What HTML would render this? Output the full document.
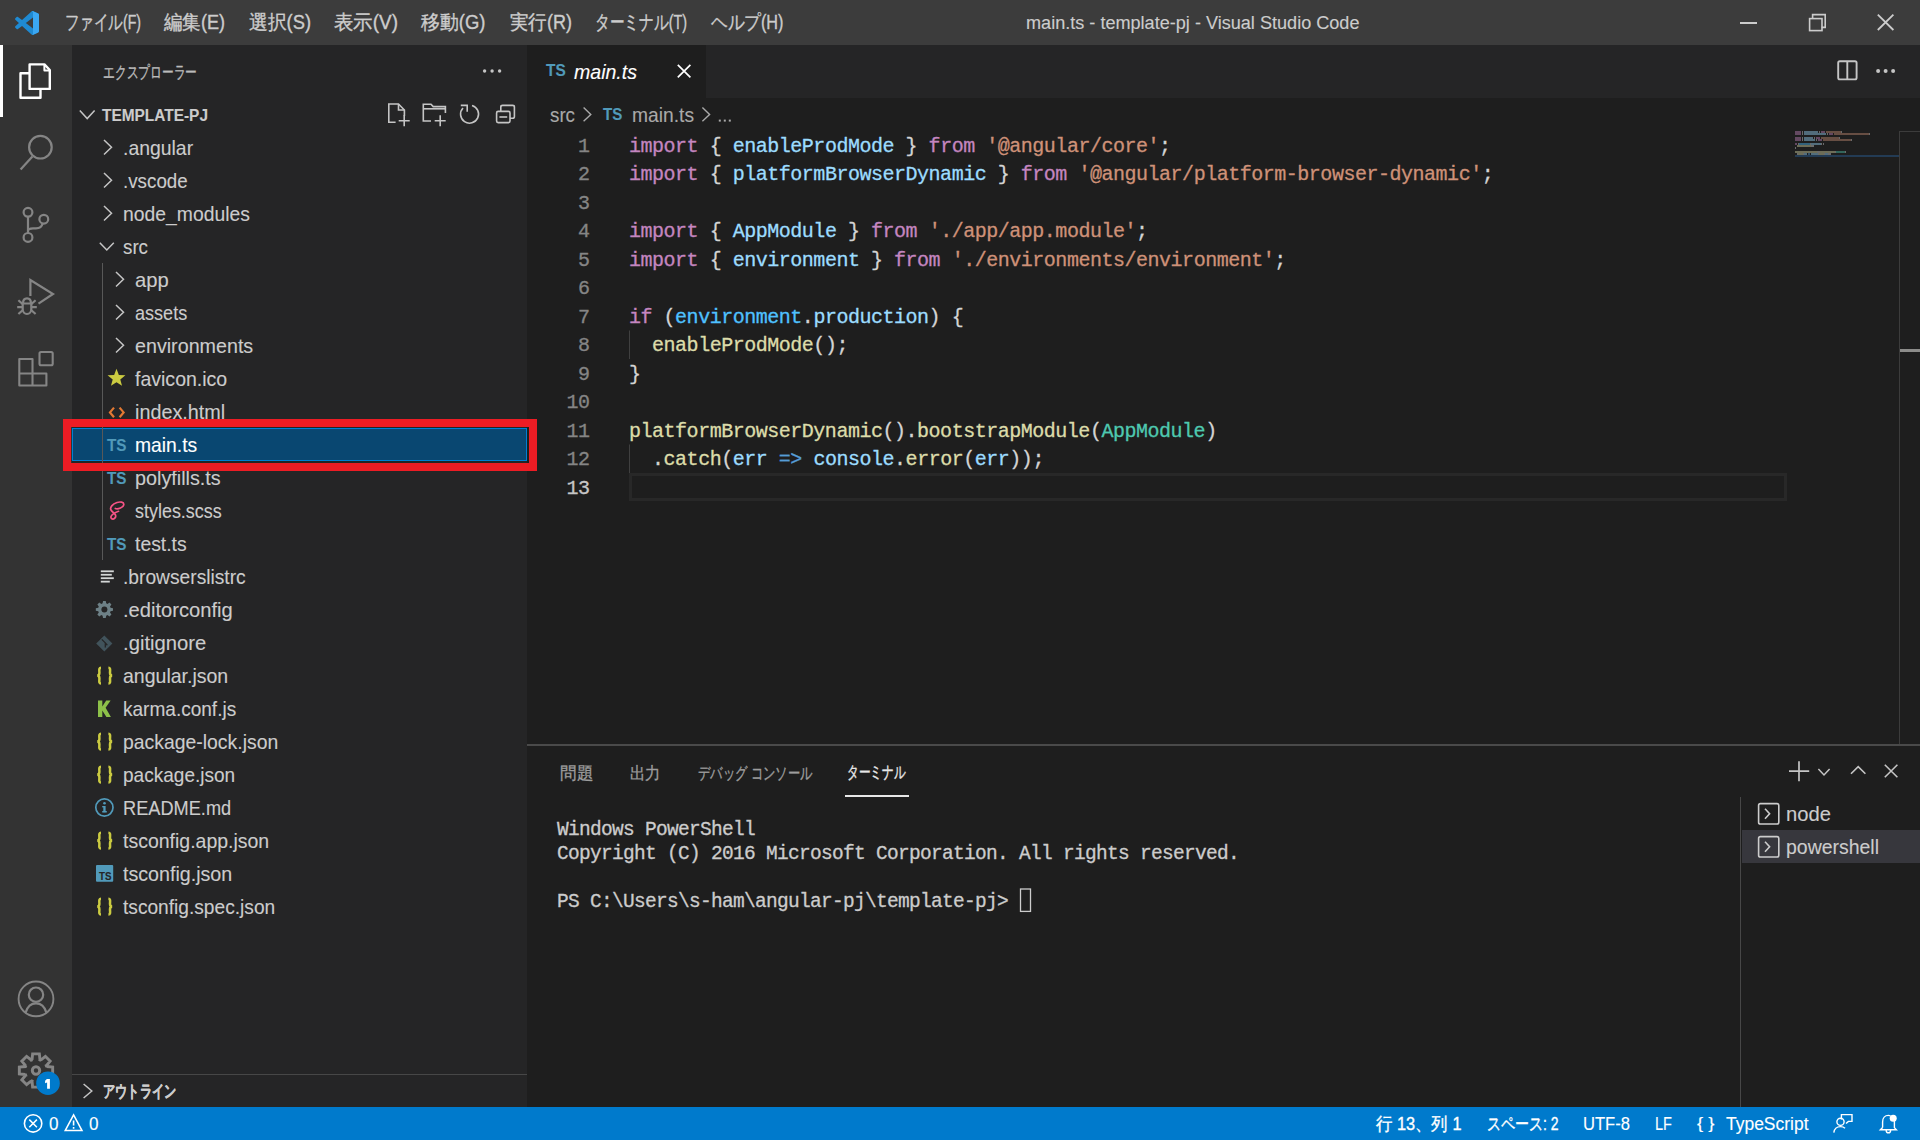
<!DOCTYPE html>
<html><head><meta charset="utf-8">
<style>
*{box-sizing:border-box;margin:0;padding:0}
html,body{width:1920px;height:1140px;overflow:hidden;background:#1e1e1e;font-family:"Liberation Sans",sans-serif;color:#cccccc}
.a{position:absolute}
.t{position:absolute;white-space:pre;line-height:1;transform-origin:0 0}
svg{position:absolute;overflow:visible}
.mono{font-family:"Liberation Mono",monospace}
.k{color:#c586c0}.v{color:#9cdcfe}.s{color:#ce9178}.f{color:#dcdcaa}.c{color:#4ec9b0}.p{color:#d4d4d4}.b{color:#569cd6}
</style></head><body>
<div class="a" style="left:0px;top:0px;width:1920px;height:45px;background:#3c3c3c;"></div>
<svg style="left:15px;top:11px" width="24" height="24" viewBox="0 0 100 100">
<path d="M96.5 10.8 L75.9 0.9 C73.5 -0.3 70.7 0.2 68.8 2.1 L29.4 38 L12.2 25 C10.6 23.8 8.4 23.9 6.9 25.2 L1.4 30.2 C-0.4 31.9 -0.4 34.7 1.4 36.4 L16.3 50 L1.4 63.6 C-0.4 65.3 -0.4 68.1 1.4 69.8 L6.9 74.8 C8.4 76.1 10.6 76.2 12.2 75 L29.4 62 L68.8 97.9 C70.7 99.8 73.5 100.3 75.9 99.1 L96.5 89.2 C98.6 88.2 100 86 100 83.6 V16.4 C100 14 98.6 11.8 96.5 10.8 Z M75 72.7 L45.1 50 L75 27.3 Z" fill="#1f8ad2"></path>
<path d="M96.5 10.8 L75.9 0.9 C73.5 -0.3 70.7 0.2 68.8 2.1 C71 0 75 1.5 75 4.5 V95.5 C75 98.5 71 100 68.8 97.9 C70.7 99.8 73.5 100.3 75.9 99.1 L96.5 89.2 C98.6 88.2 100 86 100 83.6 V16.4 C100 14 98.6 11.8 96.5 10.8 Z" fill="#3ba7f2"></path>
</svg>
<div class="t" style="left: 64.5px; top: 13.49px; font-size: 19.5px; color: rgb(204, 204, 204); -webkit-text-stroke: 0.35px currentcolor; transform: scaleX(0.7245);">ファイル(F)</div>
<div class="t" style="left: 163.5px; top: 13.49px; font-size: 19.5px; color: rgb(204, 204, 204); -webkit-text-stroke: 0.35px currentcolor; transform: scaleX(0.9242);">編集(E)</div>
<div class="t" style="left: 248.5px; top: 13.49px; font-size: 19.5px; color: rgb(204, 204, 204); -webkit-text-stroke: 0.35px currentcolor; transform: scaleX(0.9394);">選択(S)</div>
<div class="t" style="left: 333.5px; top: 13.49px; font-size: 19.5px; color: rgb(204, 204, 204); -webkit-text-stroke: 0.35px currentcolor; transform: scaleX(0.9697);">表示(V)</div>
<div class="t" style="left: 420.5px; top: 13.49px; font-size: 19.5px; color: rgb(204, 204, 204); -webkit-text-stroke: 0.35px currentcolor; transform: scaleX(0.9464);">移動(G)</div>
<div class="t" style="left: 509.5px; top: 13.49px; font-size: 19.5px; color: rgb(204, 204, 204); -webkit-text-stroke: 0.35px currentcolor; transform: scaleX(0.9243);">実行(R)</div>
<div class="t" style="left: 594.5px; top: 13.49px; font-size: 19.5px; color: rgb(204, 204, 204); -webkit-text-stroke: 0.35px currentcolor; transform: scaleX(0.7366);">ターミナル(T)</div>
<div class="t" style="left: 710.5px; top: 13.49px; font-size: 19.5px; color: rgb(204, 204, 204); -webkit-text-stroke: 0.35px currentcolor; transform: scaleX(0.8326);">ヘルプ(H)</div>
<div class="t" style="left: 1026px; top: 13.76px; font-size: 18px; color: rgb(204, 204, 204); -webkit-text-stroke: 0.12px currentcolor; transform: scaleX(1.005);">main.ts - template-pj - Visual Studio Code</div>
<div class="a" style="left:1740px;top:22px;width:17px;height:2px;background:#cccccc;"></div>
<svg style="left:0;top:0" width="1920" height="45">
<rect x="1809.6" y="18.6" width="12.4" height="12" fill="none" stroke="#cccccc" stroke-width="1.6"></rect>
<path d="M1812.6 18.6 V14.6 H1825.2 V27.4 H1821.6" fill="none" stroke="#cccccc" stroke-width="1.6"></path>
<path d="M1877.8 14.6 L1893.4 30 M1893.4 14.6 L1877.8 30" stroke="#cccccc" stroke-width="1.8"></path>
</svg>
<div class="a" style="left:0px;top:45px;width:72px;height:1062px;background:#333333;"></div>
<div class="a" style="left:0px;top:45px;width:3px;height:72px;background:#ffffff;"></div>
<svg style="left:0;top:0" width="72" height="1140">
<g fill="none" stroke="#ffffff" stroke-width="2.4" stroke-linejoin="round">
<path d="M29.6 64.4 H44.4 L49.8 70 V88.9 H29.6 Z"></path>
<path d="M44.4 64.4 V70.4 H49.8" stroke-width="2"></path>
<path d="M29.6 73.2 H20.5 V97.7 H40.5 V88.9"></path>
</g>
<g fill="none" stroke="#858585" stroke-width="2.2">
<circle cx="40.4" cy="147.2" r="11.3"></circle>
<path d="M32.4 156.4 L20.6 169.6"></path>
<circle cx="28" cy="212.3" r="4.4"></circle>
<circle cx="28" cy="237.4" r="4.4"></circle>
<circle cx="43.8" cy="219.2" r="4.4"></circle>
<path d="M28 216.7 V233"></path>
<path d="M28 231 C28 228.6 30 228.4 33 228.4 H36 C40 228.4 42 226.5 42.6 223.4"></path>
<path d="M30.4 296 V280 L53 294 L38.5 303.6"></path>
<path d="M22.3 303.5 H31.7 M23 303.5 C23 300 24.8 298.3 27 298.3 C29.2 298.3 31 300 31 303.5 M22.7 303.5 V309 C22.7 312 24.6 314 27 314 C29.4 314 31.3 312 31.3 309 V303.5"></path>
<path d="M18.4 300.2 L22.6 304 M35.6 300.2 L31.4 304 M17.2 307.2 H22.6 M31.4 307.2 H36.8 M18.4 314 L22.6 310.2 M35.6 314 L31.4 310.2"></path>
<path d="M19.3 359 H32.5 V373.5 H46.4 V385.5 H19.3 Z M32.5 373.5 H19.3 M32.5 373.5 V385.5" stroke-width="2.1" stroke-linejoin="round"></path>
<rect x="39.5" y="352" width="13.2" height="13.3" rx="1.5" stroke-width="2.1"></rect>
</g>
<g fill="none" stroke="#858585">
<circle cx="36" cy="998.9" r="17.4" stroke-width="1.9"></circle>
<circle cx="36" cy="994.7" r="7.2" stroke-width="2.2"></circle>
<path d="M25.6 1012.6 C27.5 1006.4 31.2 1003.4 36 1003.4 C40.8 1003.4 44.5 1006.4 46.4 1012.6" stroke-width="2.2"></path>
</g>
<polygon points="32.52,1059.75 32.02,1059.92 32.62,1053.84 39.38,1053.84 39.98,1059.92 41.14,1060.44 40.66,1060.21 45.39,1056.33 50.17,1061.11 46.29,1065.84 46.75,1067.02 46.58,1066.52 52.66,1067.12 52.66,1073.88 46.58,1074.48 46.06,1075.64 46.29,1075.16 50.17,1079.89 45.39,1084.67 40.66,1080.79 39.48,1081.25 39.98,1081.08 39.38,1087.16 32.62,1087.16 32.02,1081.08 30.86,1080.56 31.34,1080.79 26.61,1084.67 21.83,1079.89 25.71,1075.16 25.25,1073.98 25.42,1074.48 19.34,1073.88 19.34,1067.12 25.42,1066.52 25.94,1065.36 25.71,1065.84 21.83,1061.11 26.61,1056.33 31.34,1060.21" fill="none" stroke="#858585" stroke-width="2.9" stroke-linejoin="miter"></polygon>
<circle cx="36" cy="1070.5" r="3.7" fill="none" stroke="#858585" stroke-width="3"></circle>
<circle cx="48" cy="1083.2" r="11.8" fill="#007acc"></circle>
<path d="M46.9 1078.9 H49.9 V1088.8 H47.1 V1082.4 L45.1 1083.3 V1080.7 Z" fill="#ffffff"></path>
</svg>
<div class="a" style="left:72px;top:45px;width:455px;height:1062px;background:#252526;"></div>
<div class="t" style="left: 102.5px; top: 64.23px; font-size: 16.5px; color: rgb(187, 187, 187); -webkit-text-stroke: 0.35px currentcolor; transform: scaleX(0.6912);">エクスプローラー</div>
<div class="a" style="left:72px;top:428px;width:455px;height:33px;background:#094771;box-shadow:inset 0 0 0 1px #007fd4;"></div>
<div class="a" style="left:102px;top:263px;width:1px;height:297px;background:#585858;"></div>
<div class="a" style="left:72px;top:1074px;width:455px;height:1px;background:#474747;"></div>
<svg style="left:0;top:0" width="1920" height="1140">
<circle cx="484.6" cy="71" r="1.7" fill="#c5c5c5"></circle>
<circle cx="492.1" cy="71" r="1.7" fill="#c5c5c5"></circle>
<circle cx="499.6" cy="71" r="1.7" fill="#c5c5c5"></circle>
<path d="M79.8 110.5 L87.19999999999999 118.6 L94.6 110.5" fill="none" stroke="#c5c5c5" stroke-width="1.5"></path>
<g fill="none" stroke="#c5c5c5" stroke-width="1.6">
<path d="M395.6 122.2 H388.8 V104 H398.5 L404.4 110 V116"></path>
<path d="M398.5 104 V110 H404.4"></path>
<path d="M404.2 115.3 V126.3 M398.7 120.8 H409.7"></path>
<path d="M431 121 H423.3 V104.2 H431 L433.2 106.6 H445.4 V113"></path>
<path d="M423.3 108.8 H431.2 L433.2 108.8 H445.4"></path>
<path d="M440.2 115.3 V126.3 M434.7 120.8 H445.7"></path>
</g>
<g fill="none" stroke="#c5c5c5" stroke-width="1.6">
<path d="M463 108 A9 9 0 1 0 472 105.5"></path>
<path d="M460.8 105.4 H467.2 V111.8" stroke-linejoin="miter"></path>
<rect x="496.6" y="111.4" width="13.4" height="11.2" rx="1.5"></rect>
<path d="M500.8 111.4 V107 C500.8 106 501.6 105.4 502.6 105.4 H512.6 C513.6 105.4 514.4 106 514.4 107 V116.4 C514.4 117.4 513.6 118.2 512.6 118.2 H510"></path>
<path d="M499.4 117 H507.2"></path>
</g>
<path d="M104 140 L111.5 147.25 L104 154.5" fill="none" stroke="#c5c5c5" stroke-width="1.5"></path>
<path d="M104 173 L111.5 180.25 L104 187.5" fill="none" stroke="#c5c5c5" stroke-width="1.5"></path>
<path d="M104 206 L111.5 213.25 L104 220.5" fill="none" stroke="#c5c5c5" stroke-width="1.5"></path>
<path d="M99.8 242.8 L106.8 250 L113.8 242.8" fill="none" stroke="#c5c5c5" stroke-width="1.5"></path>
<path d="M116 272 L123.5 279.25 L116 286.5" fill="none" stroke="#c5c5c5" stroke-width="1.5"></path>
<path d="M116 305 L123.5 312.25 L116 319.5" fill="none" stroke="#c5c5c5" stroke-width="1.5"></path>
<path d="M116 338 L123.5 345.25 L116 352.5" fill="none" stroke="#c5c5c5" stroke-width="1.5"></path>
<polygon points="116.50,368.80 118.85,374.96 125.44,375.30 120.30,379.44 122.03,385.80 116.50,382.20 110.97,385.80 112.70,379.44 107.56,375.30 114.15,374.96" fill="#cbcb41"></polygon>
<path d="M114 407.6 L110 412.4 L114 417.2 M119.6 407.6 L123.6 412.4 L119.6 417.2" fill="none" stroke="#e37933" stroke-width="2.2"></path>
<path d="M115.3 508.5 C118 509.5 123.5 507.5 123.8 504.5 C124 502 120 501.5 117 502.5 C112.5 504 109.5 507.5 111 510 C112 512 114.5 513 115.5 515 C116.5 517.5 113.5 520 111.5 518.5 C109.5 517 112.5 513 118.5 511.3" fill="none" stroke="#f55385" stroke-width="1.7" stroke-linecap="round"></path>
<rect x="100.8" y="570.40" width="13" height="1.8" fill="#d4d7d6"></rect>
<rect x="100.8" y="573.85" width="11" height="1.8" fill="#d4d7d6"></rect>
<rect x="100.8" y="577.30" width="13" height="1.8" fill="#d4d7d6"></rect>
<rect x="100.8" y="580.75" width="9" height="1.8" fill="#d4d7d6"></rect>
<polygon points="110.55,607.71 112.99,608.14 112.99,610.86 110.55,611.29 110.01,612.58 111.44,614.61 109.51,616.54 107.48,615.11 106.19,615.65 105.76,618.09 103.04,618.09 102.61,615.65 101.32,615.11 99.29,616.54 97.36,614.61 98.79,612.58 98.25,611.29 95.81,610.86 95.81,608.14 98.25,607.71 98.79,606.42 97.36,604.39 99.29,602.46 101.32,603.89 102.61,603.35 103.04,600.91 105.76,600.91 106.19,603.35 107.48,603.89 109.51,602.46 111.44,604.39 110.01,606.42" fill="#6d8086"></polygon><circle cx="104.4" cy="609.5" r="3" fill="#252526"></circle>
<path d="M104.3 635.4 L112.39999999999999 643.4 L104.3 651.4 L96.2 643.4 Z" fill="#41535b"></path>
<path d="M101.8 639.4 L105.3 642.9 V647.4 M105.3 642.9 L107.3 645.1999999999999" stroke="#252526" stroke-width="1.3" fill="none"></path>
<path d="M101 667.8 C98.6 667.8 99.4 670.5 99.4 672.8 C99.4 674.6 98.6 675.6 97.2 675.6 C98.6 675.6 99.4 676.6 99.4 678.4 C99.4 680.7 98.6 683.4 101 683.4 M108.4 667.8 C110.8 667.8 110 670.5 110 672.8 C110 674.6 110.8 675.6 112.2 675.6 C110.8 675.6 110 676.6 110 678.4 C110 680.7 110.8 683.4 108.4 683.4" fill="none" stroke="#cbcb41" stroke-width="2.5"></path>
<path d="M98 700.5 H102.3 V706.5 L106.2 700.5 H110.6 L105.6 707.8 L110.9 717 H106.4 L102.3 710.5 V717 H98 Z" fill="#8dc149"></path>
<path d="M101 733.8 C98.6 733.8 99.4 736.5 99.4 738.8 C99.4 740.6 98.6 741.6 97.2 741.6 C98.6 741.6 99.4 742.6 99.4 744.4 C99.4 746.7 98.6 749.4 101 749.4 M108.4 733.8 C110.8 733.8 110 736.5 110 738.8 C110 740.6 110.8 741.6 112.2 741.6 C110.8 741.6 110 742.6 110 744.4 C110 746.7 110.8 749.4 108.4 749.4" fill="none" stroke="#cbcb41" stroke-width="2.5"></path>
<path d="M101 766.8 C98.6 766.8 99.4 769.5 99.4 771.8 C99.4 773.6 98.6 774.6 97.2 774.6 C98.6 774.6 99.4 775.6 99.4 777.4 C99.4 779.7 98.6 782.4 101 782.4 M108.4 766.8 C110.8 766.8 110 769.5 110 771.8 C110 773.6 110.8 774.6 112.2 774.6 C110.8 774.6 110 775.6 110 777.4 C110 779.7 110.8 782.4 108.4 782.4" fill="none" stroke="#cbcb41" stroke-width="2.5"></path>
<circle cx="104.4" cy="807.5" r="8.6" fill="none" stroke="#519aba" stroke-width="1.7"></circle>
<rect x="103.3" y="806" width="2.3" height="6.2" fill="#519aba"></rect><rect x="102.2" y="811" width="4.6" height="1.5" fill="#519aba"></rect><rect x="102.2" y="806" width="2.5" height="1.4" fill="#519aba"></rect><circle cx="104.5" cy="803.3" r="1.3" fill="#519aba"></circle>
<path d="M101 832.8 C98.6 832.8 99.4 835.5 99.4 837.8 C99.4 839.6 98.6 840.6 97.2 840.6 C98.6 840.6 99.4 841.6 99.4 843.4 C99.4 845.7 98.6 848.4 101 848.4 M108.4 832.8 C110.8 832.8 110 835.5 110 837.8 C110 839.6 110.8 840.6 112.2 840.6 C110.8 840.6 110 841.6 110 843.4 C110 845.7 110.8 848.4 108.4 848.4" fill="none" stroke="#cbcb41" stroke-width="2.5"></path>
<rect x="96" y="865" width="17.2" height="16.7" rx="1" fill="#519aba"></rect>
<path d="M101 898.8 C98.6 898.8 99.4 901.5 99.4 903.8 C99.4 905.6 98.6 906.6 97.2 906.6 C98.6 906.6 99.4 907.6 99.4 909.4 C99.4 911.7 98.6 914.4 101 914.4 M108.4 898.8 C110.8 898.8 110 901.5 110 903.8 C110 905.6 110.8 906.6 112.2 906.6 C110.8 906.6 110 907.6 110 909.4 C110 911.7 110.8 914.4 108.4 914.4" fill="none" stroke="#cbcb41" stroke-width="2.5"></path>
<path d="M83.6 1084 L91.8 1091.0 L83.6 1098" fill="none" stroke="#c5c5c5" stroke-width="1.5"></path>
</svg>
<div class="t" style="left: 122.9px; top: 137.12px; font-size: 21px; color: rgb(204, 204, 204); -webkit-text-stroke: 0.12px currentcolor; transform: scaleX(0.9237);">.angular</div>
<div class="t" style="left: 122.9px; top: 170.12px; font-size: 21px; color: rgb(204, 204, 204); -webkit-text-stroke: 0.12px currentcolor; transform: scaleX(0.894);">.vscode</div>
<div class="t" style="left: 122.9px; top: 203.12px; font-size: 21px; color: rgb(204, 204, 204); -webkit-text-stroke: 0.12px currentcolor; transform: scaleX(0.921);">node_modules</div>
<div class="t" style="left: 122.9px; top: 236.12px; font-size: 21px; color: rgb(204, 204, 204); -webkit-text-stroke: 0.12px currentcolor; transform: scaleX(0.8929);">src</div>
<div class="t" style="left: 134.9px; top: 269.12px; font-size: 21px; color: rgb(204, 204, 204); -webkit-text-stroke: 0.12px currentcolor; transform: scaleX(0.9616);">app</div>
<div class="t" style="left: 134.9px; top: 302.12px; font-size: 21px; color: rgb(204, 204, 204); -webkit-text-stroke: 0.12px currentcolor; transform: scaleX(0.8599);">assets</div>
<div class="t" style="left: 134.9px; top: 335.12px; font-size: 21px; color: rgb(204, 204, 204); -webkit-text-stroke: 0.12px currentcolor; transform: scaleX(0.9376);">environments</div>
<div class="t" style="left: 134.9px; top: 368.12px; font-size: 21px; color: rgb(204, 204, 204); -webkit-text-stroke: 0.12px currentcolor; transform: scaleX(0.9293);">favicon.ico</div>
<div class="t" style="left: 134.9px; top: 401.12px; font-size: 21px; color: rgb(204, 204, 204); -webkit-text-stroke: 0.12px currentcolor; transform: scaleX(0.9423);">index.html</div>
<div class="t" style="left: 134.9px; top: 434.12px; font-size: 21px; color: rgb(255, 255, 255); -webkit-text-stroke: 0.12px currentcolor; transform: scaleX(0.9189);">main.ts</div>
<div class="t" style="left: 106.83px; top: 436.84px; font-size: 16.13px; color: rgb(81, 154, 186); font-weight: bold; -webkit-text-stroke: 0.12px currentcolor; transform: scaleX(0.9469);">TS</div>
<div class="t" style="left: 134.9px; top: 467.12px; font-size: 21px; color: rgb(204, 204, 204); -webkit-text-stroke: 0.12px currentcolor; transform: scaleX(0.9414);">polyfills.ts</div>
<div class="t" style="left: 106.83px; top: 469.84px; font-size: 16.13px; color: rgb(81, 154, 186); font-weight: bold; -webkit-text-stroke: 0.12px currentcolor; transform: scaleX(0.9469);">TS</div>
<div class="t" style="left: 134.9px; top: 500.12px; font-size: 21px; color: rgb(204, 204, 204); -webkit-text-stroke: 0.12px currentcolor; transform: scaleX(0.8541);">styles.scss</div>
<div class="t" style="left: 134.9px; top: 533.12px; font-size: 21px; color: rgb(204, 204, 204); -webkit-text-stroke: 0.12px currentcolor; transform: scaleX(0.9227);">test.ts</div>
<div class="t" style="left: 106.83px; top: 535.84px; font-size: 16.13px; color: rgb(81, 154, 186); font-weight: bold; -webkit-text-stroke: 0.12px currentcolor; transform: scaleX(0.9469);">TS</div>
<div class="t" style="left: 122.9px; top: 566.12px; font-size: 21px; color: rgb(204, 204, 204); -webkit-text-stroke: 0.12px currentcolor; transform: scaleX(0.9144);">.browserslistrc</div>
<div class="t" style="left: 122.9px; top: 599.12px; font-size: 21px; color: rgb(204, 204, 204); -webkit-text-stroke: 0.12px currentcolor; transform: scaleX(0.9589);">.editorconfig</div>
<div class="t" style="left: 122.9px; top: 632.12px; font-size: 21px; color: rgb(204, 204, 204); -webkit-text-stroke: 0.12px currentcolor; transform: scaleX(0.9642);">.gitignore</div>
<div class="t" style="left: 122.9px; top: 665.12px; font-size: 21px; color: rgb(204, 204, 204); -webkit-text-stroke: 0.12px currentcolor; transform: scaleX(0.9288);">angular.json</div>
<div class="t" style="left: 122.9px; top: 698.12px; font-size: 21px; color: rgb(204, 204, 204); -webkit-text-stroke: 0.12px currentcolor; transform: scaleX(0.9065);">karma.conf.js</div>
<div class="t" style="left: 122.9px; top: 731.12px; font-size: 21px; color: rgb(204, 204, 204); -webkit-text-stroke: 0.12px currentcolor; transform: scaleX(0.9233);">package-lock.json</div>
<div class="t" style="left: 122.9px; top: 764.12px; font-size: 21px; color: rgb(204, 204, 204); -webkit-text-stroke: 0.12px currentcolor; transform: scaleX(0.9066);">package.json</div>
<div class="t" style="left: 122.9px; top: 797.12px; font-size: 21px; color: rgb(204, 204, 204); -webkit-text-stroke: 0.12px currentcolor; transform: scaleX(0.8666);">README.md</div>
<div class="t" style="left: 122.9px; top: 830.12px; font-size: 21px; color: rgb(204, 204, 204); -webkit-text-stroke: 0.12px currentcolor; transform: scaleX(0.9276);">tsconfig.app.json</div>
<div class="t" style="left: 122.9px; top: 863.12px; font-size: 21px; color: rgb(204, 204, 204); -webkit-text-stroke: 0.12px currentcolor; transform: scaleX(0.9355);">tsconfig.json</div>
<div class="t" style="left: 98.6px; top: 871.53px; font-size: 10px; color: rgb(37, 37, 38); font-weight: bold; -webkit-text-stroke: 0.12px currentcolor; transform: scaleX(0.978);">TS</div>
<div class="t" style="left: 122.9px; top: 896.12px; font-size: 21px; color: rgb(204, 204, 204); -webkit-text-stroke: 0.12px currentcolor; transform: scaleX(0.9117);">tsconfig.spec.json</div>
<div class="t" style="left: 102.5px; top: 1082.53px; font-size: 16.5px; color: rgb(204, 204, 204); font-weight: bold; -webkit-text-stroke: 0.35px currentcolor; transform: scaleX(0.7157);">アウトライン</div>
<div class="t" style="left: 101.6px; top: 107.27px; font-size: 17.4px; color: rgb(204, 204, 204); font-weight: bold; -webkit-text-stroke: 0.12px currentcolor; transform: scaleX(0.8871);">TEMPLATE-PJ</div>
<div class="a" style="left:527px;top:45px;width:1393px;height:53px;background:#252526;"></div>
<div class="a" style="left:527px;top:45px;width:179px;height:53px;background:#1e1e1e;"></div>
<div class="a" style="left:527px;top:98px;width:1393px;height:647px;background:#1e1e1e;"></div>
<div class="t" style="left: 546.25px; top: 63.09px; font-size: 15.84px; color: rgb(81, 154, 186); font-weight: bold; -webkit-text-stroke: 0.12px currentcolor; transform: scaleX(0.9736);">TS</div>
<div class="t" style="left: 574px; top: 61.12px; font-size: 21px; color: rgb(255, 255, 255); font-style: italic; -webkit-text-stroke: 0.12px currentcolor; transform: scaleX(0.9307);">main.ts</div>
<div class="t" style="left: 550.2px; top: 103.82px; font-size: 21px; color: rgb(169, 169, 169); -webkit-text-stroke: 0.12px currentcolor; transform: scaleX(0.8929);">src</div>
<div class="t" style="left: 603.45px; top: 107.49px; font-size: 15.84px; color: rgb(81, 154, 186); font-weight: bold; -webkit-text-stroke: 0.12px currentcolor; transform: scaleX(0.9538);">TS</div>
<div class="t" style="left: 632px; top: 103.82px; font-size: 21px; color: rgb(169, 169, 169); -webkit-text-stroke: 0.12px currentcolor; transform: scaleX(0.916);">main.ts</div>
<svg style="left:0;top:0" width="1920" height="1140">
<path d="M677.8 64.8 L690.4 77.4 M690.4 64.8 L677.8 77.4" stroke="#ffffff" stroke-width="1.7"></path>
<rect x="1838.2" y="61.2" width="18.4" height="18.2" rx="1.6" fill="none" stroke="#c5c5c5" stroke-width="1.9"></rect><path d="M1847.3 61.2 V79.4" stroke="#c5c5c5" stroke-width="1.9"></path>
<circle cx="1878.1" cy="70.9" r="2" fill="#c5c5c5"></circle>
<circle cx="1885.6" cy="70.9" r="2" fill="#c5c5c5"></circle>
<circle cx="1893.1" cy="70.9" r="2" fill="#c5c5c5"></circle>
<path d="M583.6 107.6 L590.8 114.4 L583.6 121.2" fill="none" stroke="#a9a9a9" stroke-width="1.4"></path>
<path d="M702.4 107.6 L709.6 114.4 L702.4 121.2" fill="none" stroke="#a9a9a9" stroke-width="1.4"></path>
<rect x="718.8" y="119.6" width="2" height="2" fill="#a9a9a9"></rect>
<rect x="723.8" y="119.6" width="2" height="2" fill="#a9a9a9"></rect>
<rect x="728.8" y="119.6" width="2" height="2" fill="#a9a9a9"></rect>
<rect x="630.5" y="474.5" width="1155" height="25" fill="none" stroke="#282828" stroke-width="3"></rect>
<rect x="629" y="330.5" width="1" height="28.5" fill="#404040"></rect><rect x="629" y="444.5" width="1" height="28.5" fill="#404040"></rect>
<rect x="1899" y="131" width="1" height="613" fill="#3c3c3c"></rect><rect x="1899" y="131" width="21" height="1" fill="#3c3c3c"></rect>
<rect x="1900" y="349" width="20" height="3" fill="#8c8c8a"></rect>
<rect x="1795" y="155" width="104" height="2" fill="#264f78" opacity="0.6"></rect>
<rect x="1795.0" y="131" width="6.0" height="2" fill="#c586c0" opacity="0.42"></rect>
<rect x="1802.0" y="131" width="1.0" height="2" fill="#d4d4d4" opacity="0.42"></rect>
<rect x="1804.0" y="131" width="14.0" height="2" fill="#9cdcfe" opacity="0.42"></rect>
<rect x="1819.0" y="131" width="1.0" height="2" fill="#d4d4d4" opacity="0.42"></rect>
<rect x="1821.0" y="131" width="4.0" height="2" fill="#c586c0" opacity="0.42"></rect>
<rect x="1826.0" y="131" width="15.0" height="2" fill="#ce9178" opacity="0.42"></rect>
<rect x="1841.0" y="131" width="1.0" height="2" fill="#d4d4d4" opacity="0.42"></rect>
<rect x="1795.0" y="133" width="6.0" height="2" fill="#c586c0" opacity="0.42"></rect>
<rect x="1802.0" y="133" width="1.0" height="2" fill="#d4d4d4" opacity="0.42"></rect>
<rect x="1804.0" y="133" width="22.0" height="2" fill="#9cdcfe" opacity="0.42"></rect>
<rect x="1827.0" y="133" width="1.0" height="2" fill="#d4d4d4" opacity="0.42"></rect>
<rect x="1829.0" y="133" width="4.0" height="2" fill="#c586c0" opacity="0.42"></rect>
<rect x="1834.0" y="133" width="35.0" height="2" fill="#ce9178" opacity="0.42"></rect>
<rect x="1869.0" y="133" width="1.0" height="2" fill="#d4d4d4" opacity="0.42"></rect>
<rect x="1795.0" y="137" width="6.0" height="2" fill="#c586c0" opacity="0.42"></rect>
<rect x="1802.0" y="137" width="1.0" height="2" fill="#d4d4d4" opacity="0.42"></rect>
<rect x="1804.0" y="137" width="9.0" height="2" fill="#9cdcfe" opacity="0.42"></rect>
<rect x="1814.0" y="137" width="1.0" height="2" fill="#d4d4d4" opacity="0.42"></rect>
<rect x="1816.0" y="137" width="4.0" height="2" fill="#c586c0" opacity="0.42"></rect>
<rect x="1821.0" y="137" width="18.0" height="2" fill="#ce9178" opacity="0.42"></rect>
<rect x="1839.0" y="137" width="1.0" height="2" fill="#d4d4d4" opacity="0.42"></rect>
<rect x="1795.0" y="139" width="6.0" height="2" fill="#c586c0" opacity="0.42"></rect>
<rect x="1802.0" y="139" width="1.0" height="2" fill="#d4d4d4" opacity="0.42"></rect>
<rect x="1804.0" y="139" width="11.0" height="2" fill="#9cdcfe" opacity="0.42"></rect>
<rect x="1816.0" y="139" width="1.0" height="2" fill="#d4d4d4" opacity="0.42"></rect>
<rect x="1818.0" y="139" width="4.0" height="2" fill="#c586c0" opacity="0.42"></rect>
<rect x="1823.0" y="139" width="28.0" height="2" fill="#ce9178" opacity="0.42"></rect>
<rect x="1851.0" y="139" width="1.0" height="2" fill="#d4d4d4" opacity="0.42"></rect>
<rect x="1795.0" y="143" width="2.0" height="2" fill="#c586c0" opacity="0.42"></rect>
<rect x="1798.0" y="143" width="1.0" height="2" fill="#d4d4d4" opacity="0.42"></rect>
<rect x="1799.0" y="143" width="11.0" height="2" fill="#4fc1ff" opacity="0.42"></rect>
<rect x="1810.0" y="143" width="1.0" height="2" fill="#d4d4d4" opacity="0.42"></rect>
<rect x="1811.0" y="143" width="10.0" height="2" fill="#9cdcfe" opacity="0.42"></rect>
<rect x="1821.0" y="143" width="1.0" height="2" fill="#d4d4d4" opacity="0.42"></rect>
<rect x="1823.0" y="143" width="1.0" height="2" fill="#d4d4d4" opacity="0.42"></rect>
<rect x="1797.0" y="145" width="14.0" height="2" fill="#dcdcaa" opacity="0.42"></rect>
<rect x="1811.0" y="145" width="3.0" height="2" fill="#d4d4d4" opacity="0.42"></rect>
<rect x="1795.0" y="147" width="1.0" height="2" fill="#d4d4d4" opacity="0.42"></rect>
<rect x="1795.0" y="151" width="22.0" height="2" fill="#dcdcaa" opacity="0.42"></rect>
<rect x="1817.0" y="151" width="3.0" height="2" fill="#d4d4d4" opacity="0.42"></rect>
<rect x="1820.0" y="151" width="15.0" height="2" fill="#dcdcaa" opacity="0.42"></rect>
<rect x="1835.0" y="151" width="1.0" height="2" fill="#d4d4d4" opacity="0.42"></rect>
<rect x="1836.0" y="151" width="9.0" height="2" fill="#4ec9b0" opacity="0.42"></rect>
<rect x="1845.0" y="151" width="1.0" height="2" fill="#d4d4d4" opacity="0.42"></rect>
<rect x="1797.0" y="153" width="1.0" height="2" fill="#d4d4d4" opacity="0.42"></rect>
<rect x="1798.0" y="153" width="5.0" height="2" fill="#dcdcaa" opacity="0.42"></rect>
<rect x="1803.0" y="153" width="1.0" height="2" fill="#d4d4d4" opacity="0.42"></rect>
<rect x="1804.0" y="153" width="3.0" height="2" fill="#9cdcfe" opacity="0.42"></rect>
<rect x="1808.0" y="153" width="2.0" height="2" fill="#569cd6" opacity="0.42"></rect>
<rect x="1811.0" y="153" width="7.0" height="2" fill="#9cdcfe" opacity="0.42"></rect>
<rect x="1818.0" y="153" width="1.0" height="2" fill="#d4d4d4" opacity="0.42"></rect>
<rect x="1819.0" y="153" width="5.0" height="2" fill="#dcdcaa" opacity="0.42"></rect>
<rect x="1824.0" y="153" width="1.0" height="2" fill="#d4d4d4" opacity="0.42"></rect>
<rect x="1825.0" y="153" width="3.0" height="2" fill="#9cdcfe" opacity="0.42"></rect>
<rect x="1828.0" y="153" width="3.0" height="2" fill="#d4d4d4" opacity="0.42"></rect>
</svg>
<div class="t" style="left:577.98px;top:136.58px;font-size:20px;color:#858585;font-family:'Liberation Mono',monospace;letter-spacing:-0.48px;-webkit-text-stroke:0.3px currentColor;">1</div>
<div class="t" style="left:629.00px;top:136.58px;font-size:20px;color:#d4d4d4;font-family:'Liberation Mono',monospace;letter-spacing:-0.48px;-webkit-text-stroke:0.3px currentColor;"><span style="color:#c586c0">import</span><span style="color:#d4d4d4"> { </span><span style="color:#9cdcfe">enableProdMode</span><span style="color:#d4d4d4"> } </span><span style="color:#c586c0">from</span><span style="color:#d4d4d4"> </span><span style="color:#ce9178">'@angular/core'</span><span style="color:#d4d4d4">;</span></div>
<div class="t" style="left:577.98px;top:165.08px;font-size:20px;color:#858585;font-family:'Liberation Mono',monospace;letter-spacing:-0.48px;-webkit-text-stroke:0.3px currentColor;">2</div>
<div class="t" style="left:629.00px;top:165.08px;font-size:20px;color:#d4d4d4;font-family:'Liberation Mono',monospace;letter-spacing:-0.48px;-webkit-text-stroke:0.3px currentColor;"><span style="color:#c586c0">import</span><span style="color:#d4d4d4"> { </span><span style="color:#9cdcfe">platformBrowserDynamic</span><span style="color:#d4d4d4"> } </span><span style="color:#c586c0">from</span><span style="color:#d4d4d4"> </span><span style="color:#ce9178">'@angular/platform-browser-dynamic'</span><span style="color:#d4d4d4">;</span></div>
<div class="t" style="left:577.98px;top:193.58px;font-size:20px;color:#858585;font-family:'Liberation Mono',monospace;letter-spacing:-0.48px;-webkit-text-stroke:0.3px currentColor;">3</div>
<div class="t" style="left:577.98px;top:222.08px;font-size:20px;color:#858585;font-family:'Liberation Mono',monospace;letter-spacing:-0.48px;-webkit-text-stroke:0.3px currentColor;">4</div>
<div class="t" style="left:629.00px;top:222.08px;font-size:20px;color:#d4d4d4;font-family:'Liberation Mono',monospace;letter-spacing:-0.48px;-webkit-text-stroke:0.3px currentColor;"><span style="color:#c586c0">import</span><span style="color:#d4d4d4"> { </span><span style="color:#9cdcfe">AppModule</span><span style="color:#d4d4d4"> } </span><span style="color:#c586c0">from</span><span style="color:#d4d4d4"> </span><span style="color:#ce9178">'./app/app.module'</span><span style="color:#d4d4d4">;</span></div>
<div class="t" style="left:577.98px;top:250.58px;font-size:20px;color:#858585;font-family:'Liberation Mono',monospace;letter-spacing:-0.48px;-webkit-text-stroke:0.3px currentColor;">5</div>
<div class="t" style="left:629.00px;top:250.58px;font-size:20px;color:#d4d4d4;font-family:'Liberation Mono',monospace;letter-spacing:-0.48px;-webkit-text-stroke:0.3px currentColor;"><span style="color:#c586c0">import</span><span style="color:#d4d4d4"> { </span><span style="color:#9cdcfe">environment</span><span style="color:#d4d4d4"> } </span><span style="color:#c586c0">from</span><span style="color:#d4d4d4"> </span><span style="color:#ce9178">'./environments/environment'</span><span style="color:#d4d4d4">;</span></div>
<div class="t" style="left:577.98px;top:279.08px;font-size:20px;color:#858585;font-family:'Liberation Mono',monospace;letter-spacing:-0.48px;-webkit-text-stroke:0.3px currentColor;">6</div>
<div class="t" style="left:577.98px;top:307.58px;font-size:20px;color:#858585;font-family:'Liberation Mono',monospace;letter-spacing:-0.48px;-webkit-text-stroke:0.3px currentColor;">7</div>
<div class="t" style="left:629.00px;top:307.58px;font-size:20px;color:#d4d4d4;font-family:'Liberation Mono',monospace;letter-spacing:-0.48px;-webkit-text-stroke:0.3px currentColor;"><span style="color:#c586c0">if</span><span style="color:#d4d4d4"> (</span><span style="color:#4fc1ff">environment</span><span style="color:#d4d4d4">.</span><span style="color:#9cdcfe">production</span><span style="color:#d4d4d4">) {</span></div>
<div class="t" style="left:577.98px;top:336.08px;font-size:20px;color:#858585;font-family:'Liberation Mono',monospace;letter-spacing:-0.48px;-webkit-text-stroke:0.3px currentColor;">8</div>
<div class="t" style="left:629.00px;top:336.08px;font-size:20px;color:#d4d4d4;font-family:'Liberation Mono',monospace;letter-spacing:-0.48px;-webkit-text-stroke:0.3px currentColor;"><span style="color:#d4d4d4">  </span><span style="color:#dcdcaa">enableProdMode</span><span style="color:#d4d4d4">();</span></div>
<div class="t" style="left:577.98px;top:364.58px;font-size:20px;color:#858585;font-family:'Liberation Mono',monospace;letter-spacing:-0.48px;-webkit-text-stroke:0.3px currentColor;">9</div>
<div class="t" style="left:629.00px;top:364.58px;font-size:20px;color:#d4d4d4;font-family:'Liberation Mono',monospace;letter-spacing:-0.48px;-webkit-text-stroke:0.3px currentColor;"><span style="color:#d4d4d4">}</span></div>
<div class="t" style="left:566.46px;top:393.08px;font-size:20px;color:#858585;font-family:'Liberation Mono',monospace;letter-spacing:-0.48px;-webkit-text-stroke:0.3px currentColor;">10</div>
<div class="t" style="left:566.46px;top:421.58px;font-size:20px;color:#858585;font-family:'Liberation Mono',monospace;letter-spacing:-0.48px;-webkit-text-stroke:0.3px currentColor;">11</div>
<div class="t" style="left:629.00px;top:421.58px;font-size:20px;color:#d4d4d4;font-family:'Liberation Mono',monospace;letter-spacing:-0.48px;-webkit-text-stroke:0.3px currentColor;"><span style="color:#dcdcaa">platformBrowserDynamic</span><span style="color:#d4d4d4">().</span><span style="color:#dcdcaa">bootstrapModule</span><span style="color:#d4d4d4">(</span><span style="color:#4ec9b0">AppModule</span><span style="color:#d4d4d4">)</span></div>
<div class="t" style="left:566.46px;top:450.08px;font-size:20px;color:#858585;font-family:'Liberation Mono',monospace;letter-spacing:-0.48px;-webkit-text-stroke:0.3px currentColor;">12</div>
<div class="t" style="left:629.00px;top:450.08px;font-size:20px;color:#d4d4d4;font-family:'Liberation Mono',monospace;letter-spacing:-0.48px;-webkit-text-stroke:0.3px currentColor;"><span style="color:#d4d4d4">  .</span><span style="color:#dcdcaa">catch</span><span style="color:#d4d4d4">(</span><span style="color:#9cdcfe">err</span><span style="color:#d4d4d4"> </span><span style="color:#569cd6">=&gt;</span><span style="color:#d4d4d4"> </span><span style="color:#9cdcfe">console</span><span style="color:#d4d4d4">.</span><span style="color:#dcdcaa">error</span><span style="color:#d4d4d4">(</span><span style="color:#9cdcfe">err</span><span style="color:#d4d4d4">));</span></div>
<div class="t" style="left:566.46px;top:478.58px;font-size:20px;color:#c6c6c6;font-family:'Liberation Mono',monospace;letter-spacing:-0.48px;-webkit-text-stroke:0.3px currentColor;">13</div>
<div class="a" style="left:527px;top:745px;width:1393px;height:362px;background:#1e1e1e;"></div>
<div class="a" style="left:527px;top:744px;width:1393px;height:1.5px;background:#4a4a4a;"></div>
<div class="t" style="left: 560px; top: 764.53px; font-size: 16.5px; color: rgb(157, 157, 157); -webkit-text-stroke: 0.35px currentcolor; transform: scaleX(0.9706);">問題</div>
<div class="t" style="left: 630px; top: 764.53px; font-size: 16.5px; color: rgb(157, 157, 157); -webkit-text-stroke: 0.35px currentcolor; transform: scaleX(0.8971);">出力</div>
<div class="t" style="left: 697.5px; top: 764.53px; font-size: 16.5px; color: rgb(157, 157, 157); -webkit-text-stroke: 0.35px currentcolor; transform: scaleX(0.7266);">デバッグ コンソール</div>
<div class="t" style="left: 847px; top: 763.83px; font-size: 16.5px; color: rgb(231, 231, 231); -webkit-text-stroke: 0.35px currentcolor; transform: scaleX(0.6871);">ターミナル</div>
<div class="a" style="left:845px;top:795px;width:64px;height:1.5px;background:#e7e7e7;"></div>
<svg style="left:0;top:0" width="1920" height="1140">
<path d="M1799 761.2 V781.2 M1789 771.2 H1809.2" stroke="#c5c5c5" stroke-width="1.7"></path>
<path d="M1818.4 769 L1824 775 L1829.6 769" fill="none" stroke="#c5c5c5" stroke-width="1.5"></path>
<path d="M1851 773.8 L1858.2 766.6 L1865.4 773.8" fill="none" stroke="#c5c5c5" stroke-width="1.6"></path>
<path d="M1884.8 764.8 L1897.4 777.2 M1897.4 764.8 L1884.8 777.2" stroke="#c5c5c5" stroke-width="1.6"></path>
<rect x="1740" y="797" width="1" height="310" fill="#474747"></rect>
<rect x="1742" y="830" width="178" height="33" fill="#37373d"></rect>
<rect x="1758.6" y="803.6" width="20.2" height="20.4" rx="1.8" fill="none" stroke="#cccccc" stroke-width="1.6"></rect>
<path d="M1765 808.8000000000001 L1769.6 813.8000000000001 L1765 818.8000000000001" fill="none" stroke="#cccccc" stroke-width="1.6"></path>
<rect x="1758.6" y="836.6" width="20.2" height="20.4" rx="1.8" fill="none" stroke="#cccccc" stroke-width="1.6"></rect>
<path d="M1765 841.8000000000001 L1769.6 846.8000000000001 L1765 851.8000000000001" fill="none" stroke="#cccccc" stroke-width="1.6"></path>
<rect x="1020.5" y="889" width="10" height="22.4" fill="none" stroke="#cccccc" stroke-width="1.3"></rect>
</svg>
<div class="t" style="left: 1785.5px; top: 802.72px; font-size: 21px; color: rgb(204, 204, 204); -webkit-text-stroke: 0.12px currentcolor; transform: scaleX(0.9632);">node</div>
<div class="t" style="left: 1785.5px; top: 835.72px; font-size: 21px; color: rgb(204, 204, 204); -webkit-text-stroke: 0.12px currentcolor; transform: scaleX(0.9264);">powershell</div>
<div class="t" style="left:557.00px;top:821.26px;font-size:19.5px;color:#cccccc;font-family:'Liberation Mono',monospace;letter-spacing:-0.7px;-webkit-text-stroke:0.3px currentColor;">Windows PowerShell</div>
<div class="t" style="left:557.00px;top:845.26px;font-size:19.5px;color:#cccccc;font-family:'Liberation Mono',monospace;letter-spacing:-0.7px;-webkit-text-stroke:0.3px currentColor;">Copyright (C) 2016 Microsoft Corporation. All rights reserved.</div>
<div class="t" style="left:557.00px;top:893.26px;font-size:19.5px;color:#cccccc;font-family:'Liberation Mono',monospace;letter-spacing:-0.7px;-webkit-text-stroke:0.3px currentColor;">PS C:\Users\s-ham\angular-pj\template-pj&gt;</div>
<div class="a" style="left:0px;top:1107px;width:1920px;height:33px;background:#007acc;"></div>
<svg style="left:0;top:0" width="1920" height="1140">
<g fill="none" stroke="#ffffff">
<circle cx="33.1" cy="1123.4" r="8.7" stroke-width="1.6"></circle>
<path d="M29.3 1119.6 L36.9 1127.2 M36.9 1119.6 L29.3 1127.2" stroke-width="1.5"></path>
<path d="M73.6 1114.8 L82 1130.6 H65.2 Z" stroke-width="1.5" stroke-linejoin="miter"></path>
<path d="M73.6 1120.6 V1125.6 M73.6 1127 V1128.8" stroke-width="1.6"></path>
<path d="M1841.4 1119.6 V1114.6 H1852 V1121.4 H1848.4 L1846 1123.6" stroke-width="1.4"></path>
<circle cx="1840.5" cy="1121.8" r="3.6" stroke-width="1.4"></circle><path d="M1833.8 1132.6 C1834.4 1128.6 1837 1126.6 1840.5 1126.6 C1842.4 1126.6 1844 1127.2 1845 1128.2" stroke-width="1.4"></path>
<path d="M1882.6 1127.6 V1122 C1882.6 1118 1885 1115.4 1888.4 1115.4 C1889.2 1115.4 1890 1115.6 1890.6 1115.8 M1894.4 1120.6 V1127.6 L1896.4 1129.8 H1880.4 L1882.6 1127.6 M1886.2 1130.4 C1886.2 1132 1887.2 1132.8 1888.4 1132.8 C1889.6 1132.8 1890.6 1132 1890.6 1130.4" stroke-width="1.4"></path>
</g><circle cx="1893.2" cy="1118.2" r="3.5" fill="#ffffff"></circle>
</svg>
<div class="t" style="left: 48.5px; top: 1114.56px; font-size: 18px; color: rgb(255, 255, 255); -webkit-text-stroke: 0.12px currentcolor; transform: scaleX(0.9485);">0</div>
<div class="t" style="left: 89px; top: 1114.56px; font-size: 18px; color: rgb(255, 255, 255); -webkit-text-stroke: 0.12px currentcolor; transform: scaleX(0.9485);">0</div>
<div class="t" style="left: 1375.5px; top: 1114.56px; font-size: 18px; color: rgb(255, 255, 255); -webkit-text-stroke: 0.35px currentcolor; transform: scaleX(0.9091);">行 13、列 1</div>
<div class="t" style="left: 1486.5px; top: 1114.56px; font-size: 18px; color: rgb(255, 255, 255); -webkit-text-stroke: 0.35px currentcolor; transform: scaleX(0.777);">スペース: 2</div>
<div class="t" style="left: 1583.4px; top: 1114.56px; font-size: 18px; color: rgb(255, 255, 255); -webkit-text-stroke: 0.12px currentcolor; transform: scaleX(0.9216);">UTF-8</div>
<div class="t" style="left: 1654.8px; top: 1114.56px; font-size: 18px; color: rgb(255, 255, 255); -webkit-text-stroke: 0.12px currentcolor; transform: scaleX(0.8089);">LF</div>
<div class="t" style="left: 1697px; top: 1114.63px; font-size: 16.5px; color: rgb(255, 255, 255); -webkit-text-stroke: 0.12px currentcolor; transform: scaleX(1.1211);">{ }</div>
<div class="t" style="left: 1725.5px; top: 1114.56px; font-size: 18px; color: rgb(255, 255, 255); -webkit-text-stroke: 0.12px currentcolor; transform: scaleX(0.9701);">TypeScript</div>
<div class="a" style="left:63px;top:419px;width:474px;height:52px;background:transparent;border:8px solid #ed1c24;"></div>

</body></html>
